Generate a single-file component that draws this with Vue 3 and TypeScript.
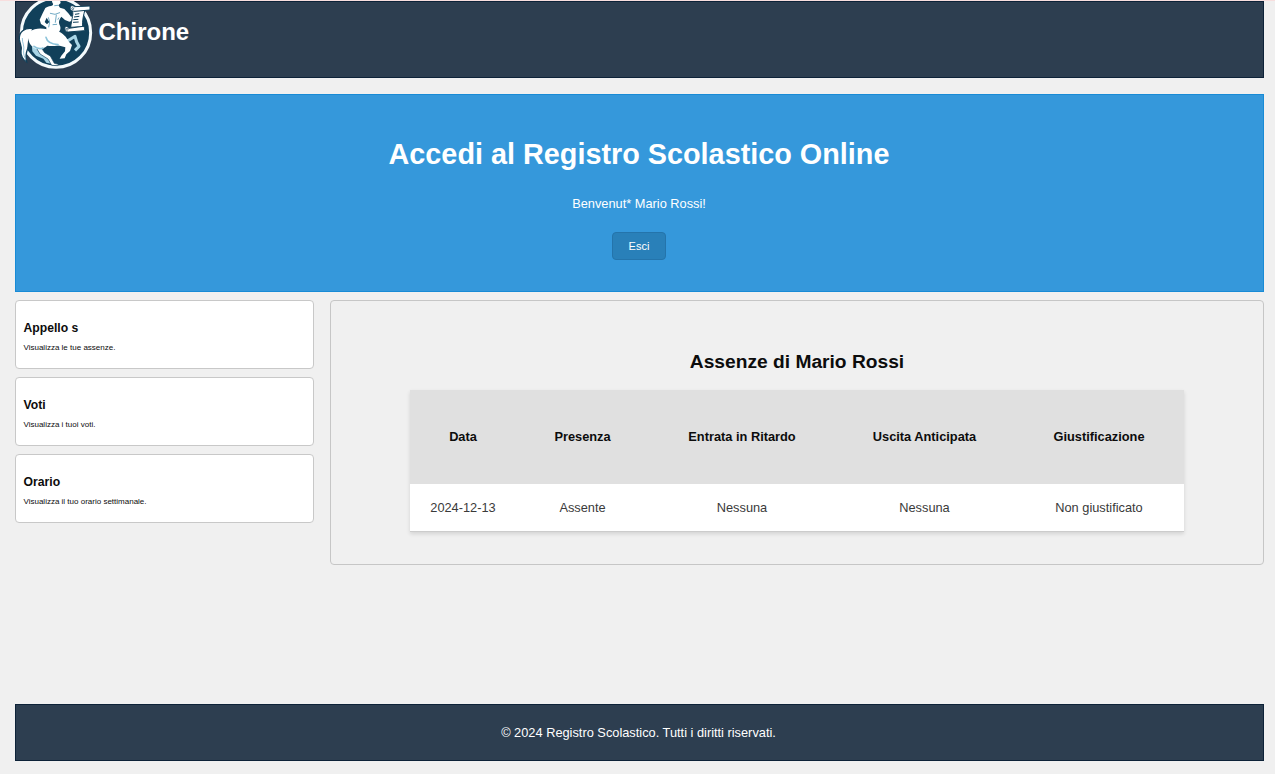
<script setup lang="ts">
interface Card {
  title: string
  text: string
}

interface Absence {
  date: string
  presence: string
  lateEntry: string
  earlyExit: string
  justification: string
}

const student = 'Mario Rossi'

const cards: Card[] = [
  { title: 'Appello s', text: 'Visualizza le tue assenze.' },
  { title: 'Voti', text: 'Visualizza i tuoi voti.' },
  { title: 'Orario', text: 'Visualizza il tuo orario settimanale.' },
]

const absences: Absence[] = [
  {
    date: '2024-12-13',
    presence: 'Assente',
    lateEntry: 'Nessuna',
    earlyExit: 'Nessuna',
    justification: 'Non giustificato',
  },
]
</script>

<template>
  <div class="page">
    <header class="header">
      <svg class="logo" viewBox="3 3 249 219" aria-hidden="true">
        <circle cx="126" cy="98" r="104" fill="#11405a" stroke="#f4fafc" stroke-width="9" />
        <!-- tail -->
        <path d="M56 86C32 82 14 96 16 119C18 133 25 140 21 153C19 167 28 180 38 186C34 170 36 158 41 146C45 130 40 118 52 108Z" fill="#fff" stroke="#11405a" stroke-width="4" />
        <path d="M25 114C24 128 32 136 29 152C28 162 31 170 35 177" fill="none" stroke="#7fb9d2" stroke-width="2.5" />
        <!-- far legs -->
        <path d="M54 140L74 144L83 164L101 172L112 191L97 188L88 176L66 167L55 154Z" fill="#a9d5e6" />
        <path d="M150 122L164 121L183 109L188 126L195 139L183 151" fill="none" stroke="#a9d5e6" stroke-width="9" stroke-linejoin="round" />
        <!-- near legs -->
        <path d="M62 118L98 134L85 148L92 158L109 168L121 190L133 193L131 197L113 196L102 177L78 162L66 142Z" fill="#fff" stroke="#11405a" stroke-width="2" />
        <path d="M128 104L160 121L174 135L168 153L157 163L152 175L137 176L142 167L153 154L154 142L126 134Z" fill="#fff" />
        <!-- horse body -->
        <path d="M48 96C60 84 82 84 99 88L129 93C147 99 158 111 164 126C150 135 124 140 100 137C88 147 72 150 60 144C44 134 38 112 48 96Z" fill="#fff" />
        <path d="M96 112C99 125 110 132 132 134M60 139C68 145 78 148 87 144" fill="none" stroke="#8bc3da" stroke-width="5" stroke-linecap="round" />
        <!-- torso, arms and head -->
        <path d="M113 0H138L140 9L133 16L138 23L151 27L163 40L171 50L180 48L180 60L166 65L153 60L142 50C134 60 133 69 138 77C142 87 137 97 129 101L99 93C94 84 99 75 102 69L109 82L100 84L81 72L77 59L86 40L94 24C101 18 110 20 117 15Z" fill="#fff" />
        <path d="M98 53L106 66L99 73L92 66Z" fill="#11405a" />
        <path d="M103 52L107 66L104 82" fill="none" stroke="#72abc5" stroke-width="3" />
        <path d="M112 0C104 4 109 11 117 13" fill="none" stroke="#11405a" stroke-width="4" />
        <path d="M122 17L131 16M109 40L123 43L137 38M127 45L124 67M117 74L128 73M134 54L132 58" fill="none" stroke="#72abc5" stroke-width="3" stroke-linecap="round" />
        <!-- scroll -->
        <path d="M173 29C181 39 173 55 170 82L206 80C204 63 209 44 213 29Z" fill="#fff" stroke="#11405a" stroke-width="3" />
        <path d="M169 22C169 15 179 17 181 20L228 18V30L183 34C170 34 167 28 169 22Z" fill="#fff" stroke="#11405a" stroke-width="3" />
        <path d="M153 82C155 77 163 80 164 85L207 79L212 82V92L163 96C154 97 151 89 153 82Z" fill="#fff" stroke="#11405a" stroke-width="3" />
        <circle cx="176" cy="26" r="3" fill="none" stroke="#11405a" stroke-width="2" />
        <circle cx="159" cy="88" r="3" fill="none" stroke="#11405a" stroke-width="2" />
        <path d="M183 43L196 41M180 51L196 49M178 59L193 58M177 67L194 66" stroke="#11405a" stroke-width="3" />
      </svg>
      <span class="brand">Chirone</span>
    </header>

    <section class="hero">
      <h1>Accedi al Registro Scolastico Online</h1>
      <p>Benvenut* {{ student }}!</p>
      <button type="button">Esci</button>
    </section>

    <main class="content">
      <aside class="cards">
        <article v-for="card in cards" :key="card.title" class="card">
          <h3>{{ card.title }}</h3>
          <p>{{ card.text }}</p>
        </article>
      </aside>

      <section class="panel">
        <h2>Assenze di {{ student }}</h2>
        <table>
          <colgroup>
            <col class="c-date" />
            <col class="c-presence" />
            <col class="c-late" />
            <col class="c-early" />
            <col class="c-just" />
          </colgroup>
          <thead>
            <tr>
              <th>Data</th>
              <th>Presenza</th>
              <th>Entrata in Ritardo</th>
              <th>Uscita Anticipata</th>
              <th>Giustificazione</th>
            </tr>
          </thead>
          <tbody>
            <tr v-for="row in absences" :key="row.date">
              <td>{{ row.date }}</td>
              <td>{{ row.presence }}</td>
              <td>{{ row.lateEntry }}</td>
              <td>{{ row.earlyExit }}</td>
              <td>{{ row.justification }}</td>
            </tr>
          </tbody>
        </table>
      </section>
    </main>

    <footer class="footer">© 2024 Registro Scolastico. Tutti i diritti riservati.</footer>
  </div>
</template>

<style>
body {
  background: #f0f0f0;
}
</style>

<style scoped>
* {
  box-sizing: border-box;
}

.page {
  display: flex;
  flex-direction: column;
  height: 774px;
  padding: 0 11px 13px 15px;
  border-top: 1px solid #f8dede;
  background: #f0f0f0;
  color: #0c0c0c;
  font-family: 'Liberation Sans', Arial, sans-serif;
  font-size: 12.8px;
}

h1,
h2,
h3,
p {
  margin: 0;
}

.header {
  display: flex;
  flex: none;
  height: 77px;
  background: #2d3e50;
  box-shadow: inset 0 0 0 1px #0d2238;
  color: #fff;
}

.logo {
  flex: none;
  width: 83px;
  height: 73px;
}

.brand {
  padding: 17px 0 0 0.5px;
  font-size: 24px;
  font-weight: 700;
  line-height: 28px;
}

.hero {
  display: flex;
  flex: none;
  flex-direction: column;
  align-items: center;
  height: 198px;
  margin-top: 16px;
  padding: 42px 1px 0 0;
  background: #3598db;
  box-shadow: inset 0 0 0 1px #188bd6;
  color: #fff;
}

.hero h1 {
  font-size: 28.8px;
  line-height: 36px;
}

.hero p {
  margin-top: 24px;
  font-size: 12.8px;
  line-height: 16px;
}

.hero button {
  width: 54px;
  height: 28px;
  margin-top: 20px;
  padding: 0;
  border: 1px solid #2474ab;
  border-radius: 4px;
  background: #2980b9;
  color: #fff;
  font: 11px/26px 'Liberation Sans', Arial, sans-serif;
}

.content {
  display: flex;
  align-items: flex-start;
  gap: 16px;
  margin-top: 8px;
}

.cards {
  display: flex;
  flex: none;
  flex-direction: column;
  gap: 8px;
  width: 299px;
}

.card {
  height: 69px;
  padding: 18px 7.5px 0;
  border: 1px solid #c8c8c8;
  border-radius: 4px;
  background: #fff;
}

.card h3 {
  font-size: 12.2px;
  line-height: 18px;
}

.card p {
  margin-top: 6px;
  font-size: 8px;
  line-height: 10px;
}

.panel {
  flex: 1;
  height: 265px;
  padding: 49px 0 0 79px;
  border: 1px solid #c6c6c6;
  border-radius: 4px;
}

.panel h2 {
  width: 774px;
  font-size: 19.2px;
  line-height: 24px;
  text-align: center;
}

table {
  width: 774px;
  margin-top: 16px;
  border-collapse: separate;
  border-spacing: 0;
  table-layout: fixed;
  background: #fff;
  box-shadow: 0 2px 4px rgba(0, 0, 0, 0.12);
  text-align: center;
}

.c-date {
  width: 106px;
}

.c-presence {
  width: 133px;
}

.c-late {
  width: 186px;
}

.c-early {
  width: 179px;
}

.c-just {
  width: 170px;
}

th,
td {
  padding: 0;
  font-size: 12.8px;
}

th {
  height: 94px;
  padding-bottom: 2px;
  background: #e0e0e0;
}

td {
  height: 48px;
  border-bottom: 1px solid #ccc;
  color: #3a3a3a;
}

.footer {
  flex: none;
  height: 57px;
  margin-top: auto;
  padding-right: 2px;
  background: #2d3e50;
  box-shadow: inset 0 0 0 1px #0d2238;
  color: #fff;
  line-height: 57px;
  text-align: center;
}
</style>
